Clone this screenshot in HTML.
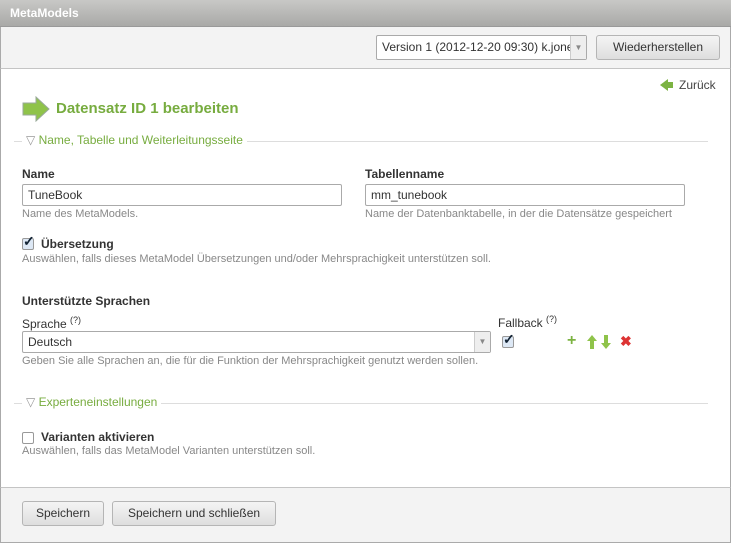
<!DOCTYPE html><html><head><meta charset="utf-8"><style>
*{box-sizing:border-box;margin:0;padding:0}
body{width:731px;height:543px;background:#fff;font-family:"Liberation Sans",sans-serif;font-size:12px;color:#333;position:relative;overflow:hidden}
.a{position:absolute;white-space:nowrap}
.hdr{left:0;top:0;width:731px;height:27px;background:linear-gradient(#c8c8c6,#a9a9a7);color:#fff;font-weight:bold;font-size:12px;padding:6px 10px;border-bottom:1px solid #999}
.tb{left:0;top:27px;width:731px;height:42px;background:#f3f3f3;border-bottom:1px solid #c4c4c4;border-left:1px solid #aaa;border-right:1px solid #aaa}
.frame{left:0;top:69px;width:731px;height:418px;border-left:1px solid #aaa;border-right:1px solid #aaa}
.ft{left:0;top:487px;width:731px;height:56px;background:#f3f3f3;border:1px solid #aaa;border-top:1px solid #c4c4c4}
.btn{position:absolute;background:linear-gradient(#f4f4f4,#dedede);border:1px solid #b5b5b5;border-radius:3px;text-align:center;font-size:12px;color:#333;line-height:23px}
.inp{position:absolute;border:1px solid #aaa;background:#fff;font-size:12px;padding:0 5px;line-height:21px;border-radius:2px}
.sel .arr{position:absolute;right:0;top:0;bottom:0;width:16px;border-left:1px solid #ccc;background:#eee;color:#888;font-size:8px;text-align:center}
.lbl{font-weight:bold;font-size:12px;color:#333}
.help{font-size:11px;color:#888}
.leg{color:#77ac3f;font-size:12px}
.line{position:absolute;height:1px;background:#ddd}
.cb{position:absolute;width:12px;height:12px;border:1px solid #999;border-radius:2px;background:#fff}
</style></head><body>
<div class="a hdr">MetaModels</div>
<div class="a tb"></div>
<div class="inp sel" style="left:376px;top:35px;width:211px;height:25px;line-height:23px">Version 1 (2012-12-20 09:30) k.jone<span class="arr" style="line-height:23px">▼</span></div>
<div class="btn" style="left:596px;top:35px;width:124px;height:25px">Wiederherstellen</div>
<div class="a frame"></div>
<div class="a" style="left:660px;top:79px;width:0;height:0;border-top:6px solid transparent;border-bottom:6px solid transparent;border-right:8px solid #7cb342"></div>
<div class="a" style="left:667px;top:82px;width:6px;height:6px;background:#7cb342"></div>
<div class="a" style="left:679px;top:78px;font-size:12px;color:#444">Zurück</div>
<svg class="a" style="left:22px;top:96px" width="28" height="26"><path d="M1 7h13V1l13 12-13 12v-6H1z" fill="#8fc34a" stroke="#9a9" stroke-width="1"/></svg>
<div class="a" style="left:56px;top:100px;font-size:15px;font-weight:bold;color:#77ac3f">Datensatz ID 1 bearbeiten</div>
<div class="line" style="left:14px;top:141px;width:694px"></div>
<div class="a leg" style="left:22px;top:133px;background:#fff;padding:0 4px 0 4px"><span style="color:#999">▽</span> Name, Tabelle und Weiterleitungsseite</div>
<div class="a lbl" style="left:22px;top:167px">Name</div>
<div class="inp" style="left:22px;top:184px;width:320px;height:22px">TuneBook</div>
<div class="a help" style="left:22px;top:208px">Name des MetaModels.</div>
<div class="a lbl" style="left:365px;top:167px">Tabellenname</div>
<div class="inp" style="left:365px;top:184px;width:320px;height:22px">mm_tunebook</div>
<div class="a help" style="left:365px;top:208px">Name der Datenbanktabelle, in der die Datensätze gespeichert</div>
<div class="cb" style="left:22px;top:238px;background:#dde8f5"></div><div class="a" style="left:23px;top:233px;font-size:14px;font-weight:bold;color:#123">✓</div>
<div class="a lbl" style="left:41px;top:237px">Übersetzung</div>
<div class="a help" style="left:22px;top:253px">Auswählen, falls dieses MetaModel Übersetzungen und/oder Mehrsprachigkeit unterstützen soll.</div>
<div class="a lbl" style="left:22px;top:294px">Unterstützte Sprachen</div>
<div class="a" style="left:22px;top:315px">Sprache <sup style="font-size:9px">(?)</sup></div>
<div class="inp sel" style="left:22px;top:331px;width:469px;height:22px;line-height:20px">Deutsch<span class="arr" style="line-height:20px">▼</span></div>
<div class="a" style="left:498px;top:314px">Fallback <sup style="font-size:9px">(?)</sup></div>
<div class="cb" style="left:502px;top:336px;background:#dde8f5"></div><div class="a" style="left:503px;top:331px;font-size:14px;font-weight:bold;color:#123">✓</div>
<div class="a" style="left:567px;top:332px;font-size:16px;font-weight:bold;color:#7cb342">+</div>
<svg class="a" style="left:587px;top:335px" width="26" height="14"><path d="M5 0L0 6h3v8h4V6h3z" fill="#8fc34a"/><path d="M19 14l5-6h-3V0h-4v8h-3z" fill="#8fc34a"/></svg>
<div class="a" style="left:620px;top:333px;font-size:14px;font-weight:bold;color:#d33">✖</div>
<div class="a help" style="left:22px;top:355px">Geben Sie alle Sprachen an, die für die Funktion der Mehrsprachigkeit genutzt werden sollen.</div>
<div class="line" style="left:14px;top:403px;width:694px"></div>
<div class="a leg" style="left:22px;top:395px;background:#fff;padding:0 4px 0 4px"><span style="color:#999">▽</span> Experteneinstellungen</div>
<div class="cb" style="left:22px;top:432px"></div>
<div class="a lbl" style="left:41px;top:430px">Varianten aktivieren</div>
<div class="a help" style="left:22px;top:445px">Auswählen, falls das MetaModel Varianten unterstützen soll.</div>
<div class="a ft"></div>
<div class="btn" style="left:22px;top:501px;width:82px;height:25px">Speichern</div>
<div class="btn" style="left:112px;top:501px;width:164px;height:25px">Speichern und schließen</div>
</body></html>
